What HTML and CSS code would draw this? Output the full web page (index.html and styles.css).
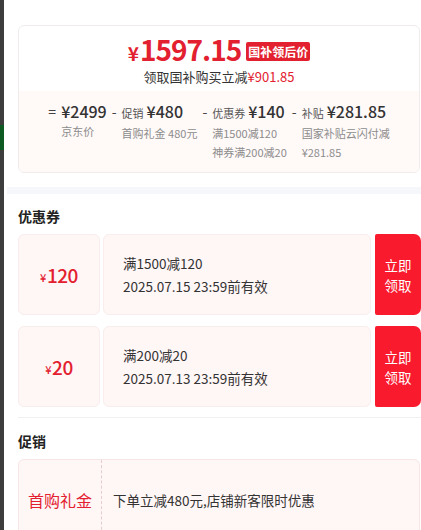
FILE: index.html
```html
<!DOCTYPE html>
<html lang="zh-CN">
<head>
    <meta charset="UTF-8">
    <meta name="viewport" content="width=device-width, initial-scale=1.0">
    <title>优惠明细</title>
    <link rel="stylesheet" href="styles.css">
</head>
<body>
    <div class="backdrop">
        <div class="backdrop-green"></div>
    </div>
    <div class="panel">
        <div class="price-card">
            <div class="price-top">
                <div class="price-row">
                    <span class="price"><span class="price-yen">¥</span>1597.15</span>
                    <span class="price-badge">国补领后价</span>
                </div>
                <div class="price-sub">领取国补购买立减<span class="red">¥901.85</span></div>
            </div>
            <div class="price-detail">
                <div class="calc-col">
                    <span class="op">=</span>
                    <div class="calc-block">
                        <div class="calc-value">¥2499</div>
                        <div class="calc-label">京东价</div>
                    </div>
                </div>
                <div class="calc-col">
                    <span class="op">-</span>
                    <div class="calc-block">
                        <div class="calc-value"><span class="calc-tag">促销</span>¥480</div>
                        <div class="calc-label">首购礼金 480元</div>
                    </div>
                </div>
                <div class="calc-col">
                    <span class="op">-</span>
                    <div class="calc-block">
                        <div class="calc-value"><span class="calc-tag">优惠券</span>¥140</div>
                        <div class="calc-label">满1500减120</div>
                        <div class="calc-label">神券满200减20</div>
                    </div>
                </div>
                <div class="calc-col">
                    <span class="op">-</span>
                    <div class="calc-block">
                        <div class="calc-value"><span class="calc-tag">补贴</span>¥281.85</div>
                        <div class="calc-label">国家补贴云闪付减</div>
                        <div class="calc-label">¥281.85</div>
                    </div>
                </div>
            </div>
        </div>

        <div class="band"></div>

        <h2 class="section-title">优惠券</h2>
        <div class="coupon">
            <div class="coupon-amount"><span class="coupon-yen">¥</span>120</div>
            <div class="coupon-info">
                <div>满1500减120</div>
                <div>2025.07.15 23:59前有效</div>
            </div>
            <button type="button" class="coupon-btn">立即<br>领取</button>
        </div>
        <div class="coupon">
            <div class="coupon-amount"><span class="coupon-yen">¥</span>20</div>
            <div class="coupon-info">
                <div>满200减20</div>
                <div>2025.07.13 23:59前有效</div>
            </div>
            <button type="button" class="coupon-btn">立即<br>领取</button>
        </div>

        <div class="divider"></div>

        <h2 class="section-title promo-title">促销</h2>
        <div class="promo">
            <div class="promo-name">首购礼金</div>
            <div class="promo-text">下单立减480元,店铺新客限时优惠</div>
        </div>
    </div>
</body>
</html>
```

FILE: styles.css
```css
body {
    margin: 0;
    display: flex;
    font-family: "Noto Sans CJK SC", "Microsoft YaHei", sans-serif;
    color: #333;
    background-color: #fff;
    overflow: hidden;
    height: 530px;
}
.backdrop {
    width: 4px;
    flex-shrink: 0;
    background-color: #3d3d3d;
    padding-top: 125px;
}
.backdrop-green {
    height: 25px;
    background-color: #0d5a22;
}
.panel {
    flex: 1;
    padding: 25px 0 0 14px;
}
.red {
    color: #e3202f;
}

/* price card */
.price-card {
    border: 1px solid #f0ecec;
    border-radius: 6px;
    overflow: hidden;
    margin-right: 1px;
}
.price-top {
    padding: 8px 0 5px;
    text-align: center;
}
.price-row {
    display: flex;
    justify-content: center;
    align-items: center;
    height: 34px;
}
.price {
    color: #e3202f;
    font-size: 28px;
    font-weight: bold;
    line-height: 34px;
    letter-spacing: -1px;
}
.price-yen {
    font-size: 19px;
    margin-right: 2px;
}
.price-badge {
    margin-left: 5px;
    background-color: #e3202f;
    color: #fff;
    font-size: 12px;
    font-weight: bold;
    line-height: 19px;
    padding: 0 2px;
    border-radius: 2px;
}
.price-sub {
    font-size: 13px;
    line-height: 18px;
    color: #333;
}
.price-detail {
    background-color: #fff9f8;
    display: flex;
    justify-content: center;
    gap: 5px;
    padding: 9px 0 10px;
}
.calc-col {
    display: flex;
    align-items: flex-start;
}
.op {
    font-size: 14px;
    line-height: 22px;
    color: #444;
    margin-right: 5px;
}
.calc-value {
    font-size: 16px;
    line-height: 22px;
    font-weight: 500;
    color: #333;
    white-space: nowrap;
}
.calc-tag {
    font-size: 11px;
    font-weight: normal;
    color: #555;
    margin-right: 3px;
}
.calc-label {
    font-size: 11px;
    line-height: 19px;
    color: #8c8c8c;
    white-space: nowrap;
}

.band {
    height: 7px;
    background-color: #f6f7fb;
    margin: 14px 0 0 -11px;
}

.section-title {
    margin: 12px 0 8px;
    font-size: 14px;
    line-height: 20px;
    font-weight: bold;
    color: #222;
}

/* coupons */
.coupon {
    display: flex;
    height: 81px;
    margin-bottom: 11px;
}
.coupon-amount,
.coupon-info {
    background-color: #fff6f6;
    border: 1px solid #f9eded;
    border-radius: 6px;
    box-sizing: border-box;
}
.coupon-amount {
    width: 82px;
    display: flex;
    align-items: center;
    justify-content: center;
    color: #e3202f;
    font-size: 19px;
    font-weight: 500;
    letter-spacing: -0.5px;
}
.coupon-yen {
    font-size: 11px;
    margin-top: 4px;
    margin-right: 1px;
}
.coupon-info {
    flex: 1;
    margin-left: 3px;
    display: flex;
    flex-direction: column;
    justify-content: center;
    padding-left: 19px;
    font-size: 13.5px;
    line-height: 23px;
    color: #333;
}
.coupon-btn {
    width: 46px;
    margin-left: 4px;
    background-color: #f91a2d;
    color: #fff;
    border: none;
    border-radius: 2px 7px 7px 2px;
    font-family: inherit;
    font-size: 13.5px;
    line-height: 20px;
    padding: 0;
    cursor: pointer;
}

.divider {
    height: 1px;
    background-color: #f0f0f0;
    margin-top: -1px;
}
.promo-title {
    margin-top: 13px;
}

/* promotion */
.promo {
    display: flex;
    height: 80px;
    background-color: #fff6f6;
    border: 1px solid #f7e6e6;
    border-radius: 6px;
    margin-right: 1px;
}
.promo-name {
    width: 82px;
    border-right: 1px dashed #e6cccc;
    display: flex;
    align-items: center;
    justify-content: center;
    color: #e3202f;
    font-size: 16px;
}
.promo-text {
    display: flex;
    align-items: center;
    padding-left: 11px;
    font-size: 13.5px;
    color: #333;
}
```
